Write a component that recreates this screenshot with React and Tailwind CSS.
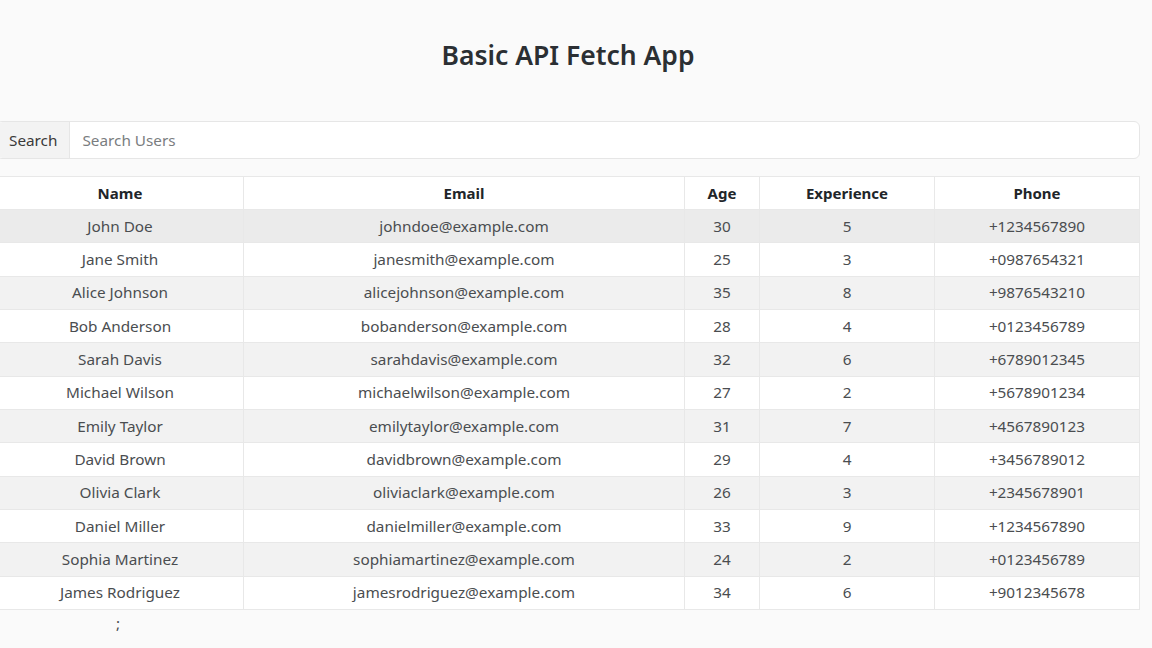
import React, { useState } from 'react';

const users = [
  { name: 'John Doe', email: 'johndoe@example.com', age: 30, experience: 5, phone: '+1234567890' },
  { name: 'Jane Smith', email: 'janesmith@example.com', age: 25, experience: 3, phone: '+0987654321' },
  { name: 'Alice Johnson', email: 'alicejohnson@example.com', age: 35, experience: 8, phone: '+9876543210' },
  { name: 'Bob Anderson', email: 'bobanderson@example.com', age: 28, experience: 4, phone: '+0123456789' },
  { name: 'Sarah Davis', email: 'sarahdavis@example.com', age: 32, experience: 6, phone: '+6789012345' },
  { name: 'Michael Wilson', email: 'michaelwilson@example.com', age: 27, experience: 2, phone: '+5678901234' },
  { name: 'Emily Taylor', email: 'emilytaylor@example.com', age: 31, experience: 7, phone: '+4567890123' },
  { name: 'David Brown', email: 'davidbrown@example.com', age: 29, experience: 4, phone: '+3456789012' },
  { name: 'Olivia Clark', email: 'oliviaclark@example.com', age: 26, experience: 3, phone: '+2345678901' },
  { name: 'Daniel Miller', email: 'danielmiller@example.com', age: 33, experience: 9, phone: '+1234567890' },
  { name: 'Sophia Martinez', email: 'sophiamartinez@example.com', age: 24, experience: 2, phone: '+0123456789' },
  { name: 'James Rodriguez', email: 'jamesrodriguez@example.com', age: 34, experience: 6, phone: '+9012345678' },
];

function App() {
  const [search, setSearch] = useState('');

  const filtered = users.filter((u) =>
    u.name.toLowerCase().includes(search.toLowerCase())
  );

  return (
    <div className="min-h-screen bg-[#fafafa] text-[#212529] font-['Noto_Sans',sans-serif] overflow-hidden">
      <div className="ml-[-4px] w-[1144px]">
        <h1 className="pt-[36px] text-center text-[26.5px] font-semibold leading-[38px] text-[#2b2f33]">
          Basic API Fetch App
        </h1>
        <div className="flex h-[38px] mt-[47px] rounded-[6px] border border-[#e6e6e6] bg-white">
          <span className="flex items-center px-[12px] bg-[#f3f3f3] border-r border-[#e6e6e6] text-[15.3px] text-[#3a3a3a] rounded-l-[6px]">
            Search
          </span>
          <input
            type="text"
            value={search}
            onChange={(e) => setSearch(e.target.value)}
            placeholder="Search Users"
            className="flex-1 px-[12px] text-[15.3px] outline-none bg-transparent placeholder:text-[#7a7d80] rounded-r-[6px]"
          />
        </div>
        <table className="mt-[17px] w-full border-collapse bg-white text-[15.3px] text-center">
          <thead>
            <tr className="h-[33px]">
              <th className="w-[247px] border border-[#e8e8e8] font-bold text-[15px] text-[#212529]">Name</th>
              <th className="w-[441px] border border-[#e8e8e8] font-bold text-[15px]">Email</th>
              <th className="w-[75px] border border-[#e8e8e8] font-bold text-[15px]">Age</th>
              <th className="w-[175px] border border-[#e8e8e8] font-bold text-[15px]">Experience</th>
              <th className="border border-[#e8e8e8] font-bold text-[15px]">Phone</th>
            </tr>
          </thead>
          <tbody className="text-[#4a4d50]">
            {filtered.map((u, i) => (
              <tr
                key={u.name}
                className={`h-[33.33px] ${i === 0 ? 'bg-[#ebebeb]' : i % 2 === 0 ? 'bg-[#f2f2f2]' : 'bg-white'}`}
              >
                <td className="border border-[#e8e8e8]">{u.name}</td>
                <td className="border border-[#e8e8e8]">{u.email}</td>
                <td className="border border-[#e8e8e8]">{u.age}</td>
                <td className="border border-[#e8e8e8]">{u.experience}</td>
                <td className="border border-[#e8e8e8]">{u.phone}</td>
              </tr>
            ))}
          </tbody>
        </table>
        <div className="pl-[120px] pt-[2px] text-[15.3px] text-[#464a4e]">;</div>
      </div>
    </div>
  );
}

export default App;
